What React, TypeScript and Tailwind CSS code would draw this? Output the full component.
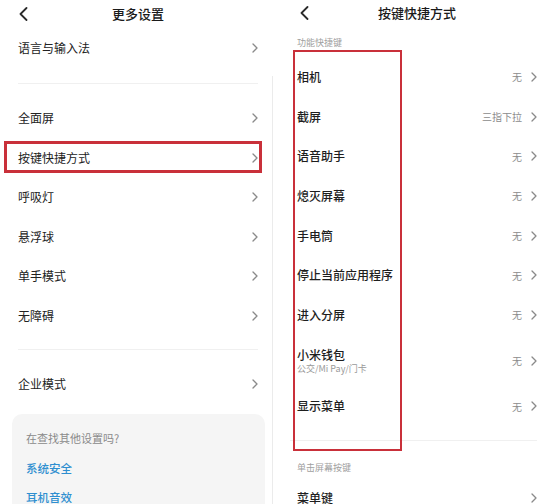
import React from 'react';

const font = { fontFamily: '"Noto Sans CJK SC", "Noto Sans", sans-serif' };

function Chevron() {
  return (
    <svg width="6" height="10" viewBox="0 0 6 10" className="shrink-0">
      <path d="M1 1 L5 5 L1 9" fill="none" stroke="#8a8a8a" strokeWidth="1.3" strokeLinecap="round" strokeLinejoin="round" />
    </svg>
  );
}

function Back() {
  return (
    <svg width="9" height="14" viewBox="0 0 9 14">
      <path d="M7.5 1 L1.5 7 L7.5 13" fill="none" stroke="#2a2a2a" strokeWidth="1.8" strokeLinecap="round" strokeLinejoin="round" />
    </svg>
  );
}

function LeftRow({ label }: { label: string }) {
  return (
    <div className="h-[39.5px] flex items-center justify-between">
      <span className="text-[12px] text-[#222]">{label}</span>
      <Chevron />
    </div>
  );
}

function RightRow({ label, value, sub }: { label: string; value: string; sub?: string }) {
  return (
    <div className={`${sub ? 'h-[51.5px]' : 'h-[39.7px]'} flex items-center justify-between`}>
      <div className="flex flex-col">
        <span className="text-[12px] font-medium text-[#1e1e1e] leading-[16px]">{label}</span>
        {sub && <span className="text-[9px] text-[#9a9a9a] leading-[12px]">{sub}</span>}
      </div>
      <div className="flex items-center gap-[9px]">
        <span className="text-[10px] text-[#8c8c8c]">{value}</span>
        <Chevron />
      </div>
    </div>
  );
}

export default function App() {
  const shortcuts: { label: string; value: string; sub?: string }[] = [
    { label: '相机', value: '无' },
    { label: '截屏', value: '三指下拉' },
    { label: '语音助手', value: '无' },
    { label: '熄灭屏幕', value: '无' },
    { label: '手电筒', value: '无' },
    { label: '停止当前应用程序', value: '无' },
    { label: '进入分屏', value: '无' },
    { label: '小米钱包', value: '无', sub: '公交/Mi Pay/门卡' },
    { label: '显示菜单', value: '无' },
  ];

  return (
    <div className="w-[554px] h-[504px] overflow-hidden flex bg-white" style={font}>
      {/* left screen */}
      <div className="w-[272px] shrink-0 relative">
        <div className="pl-[18px] pr-[14px]">
          <div className="h-[28px] flex items-center relative">
            <div className="pl-[1px]"><Back /></div>
            <span className="absolute left-0 right-0 text-center text-[13px] font-medium text-[#1a1a1a] pointer-events-none">更多设置</span>
          </div>
          <LeftRow label="语言与输入法" />
          <div className="h-px bg-[#f0f0f0] mt-[15px] mb-[15px]" />
          {['全面屏', '按键快捷方式', '呼吸灯', '悬浮球', '单手模式', '无障碍'].map(l => (
            <LeftRow key={l} label={l} />
          ))}
          <div className="h-px bg-[#f0f0f0] mt-[13px] mb-[15px]" />
          <LeftRow label="企业模式" />
        </div>
        <div className="ml-[12px] w-[253px] mt-[10px] h-[110px] rounded-[10px] bg-[#f5f5f5] px-[14px] pt-[15px]">
          <div className="text-[11px] text-[#8a8a8a] leading-[18px]">在查找其他设置吗?</div>
          <div className="text-[11.5px] font-medium text-[#2f8fd0] leading-[18px] mt-[12px]">系统安全</div>
          <div className="text-[11.5px] font-medium text-[#2f8fd0] leading-[18px] mt-[11px]">耳机音效</div>
        </div>
        <div className="absolute left-[4px] top-[141px] w-[258px] h-[32px] border-[3px] border-[#c9303a]" />
      </div>

      <div className="w-px bg-[#ebebeb] mt-[76px] shrink-0" />

      {/* right screen */}
      <div className="flex-1 relative pl-[24px] pr-[17px]">
        <div className="h-[26px] flex items-center relative">
          <div className="pl-[3px]"><Back /></div>
          <span className="absolute left-0 right-0 text-center text-[13px] font-medium text-[#1a1a1a] pointer-events-none">按键快捷方式</span>
        </div>
        <div className="h-[31px] pt-[11px] text-[9px] text-[#a0a0a0] leading-[12px]">功能快捷键</div>
        {shortcuts.map(s => (
          <RightRow key={s.label} label={s.label} value={s.value} sub={s.sub} />
        ))}
        <div className="h-px bg-[#f0f0f0] mt-[14px] -ml-[7px]" />
        <div className="pt-[21px] text-[9px] text-[#a0a0a0] leading-[12px]">单击屏幕按键</div>
        <div className="h-[39px] flex items-center justify-between mt-[4px]">
          <span className="text-[12px] font-medium text-[#1e1e1e]">菜单键</span>
          <Chevron />
        </div>
        <div className="absolute left-[20px] top-[50px] w-[109px] h-[401px] border-[2.5px] border-[#c9303a]" />
      </div>
    </div>
  );
}
